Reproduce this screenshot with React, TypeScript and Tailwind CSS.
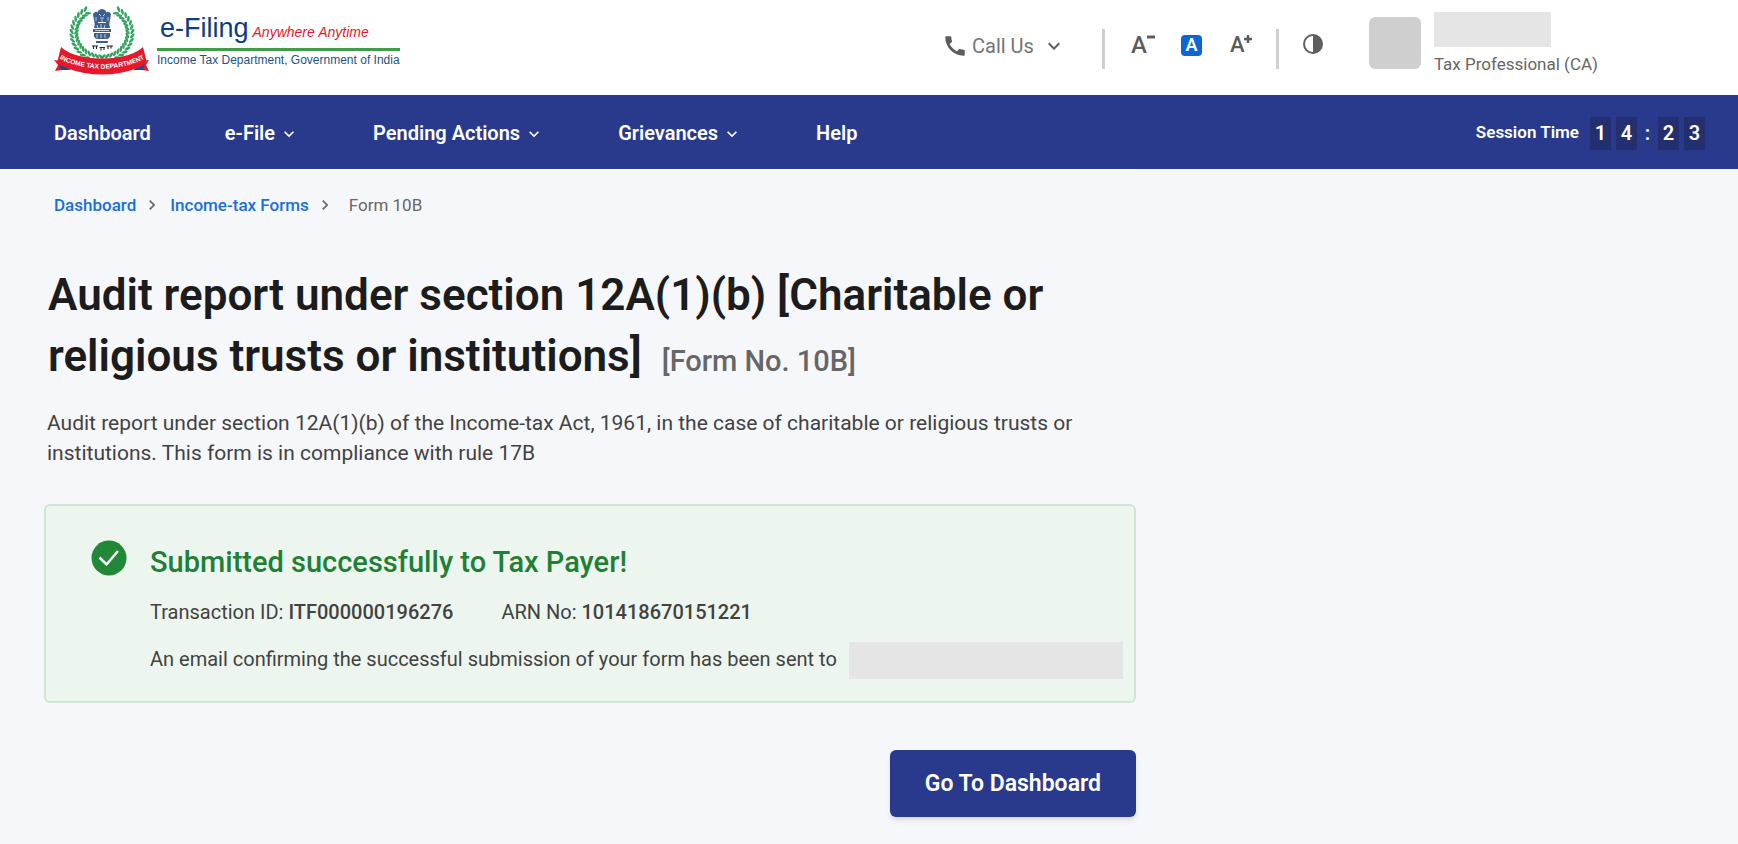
import React from "react";
import { MdCall, MdExpandMore, MdChevronRight } from "react-icons/md";

const leafAngles = [-58, -49, -40, -31, -22, -13, -4, 5, 14, 23, 32, 41, 50, 59, 68, 77, 86];

function WreathHalf({ flip }: { flip: boolean }) {
  return (
    <g transform={flip ? "translate(204 0) scale(-1 1)" : undefined} fill="#2fa45c">
      {leafAngles.map((angle) => {
        const rad = (angle * Math.PI) / 180;
        const x = 102 + Math.cos(rad) * 28;
        const y = 33 + Math.sin(rad) * 26;
        return (
          <g key={angle} transform={`translate(${x} ${y}) rotate(${angle - 90})`}>
            <ellipse cx="1" cy="-2.3" rx="3.1" ry="1.3" transform="rotate(-35)" />
            <ellipse cx="1" cy="2.3" rx="3.1" ry="1.3" transform="rotate(35)" />
          </g>
        );
      })}
    </g>
  );
}

function Emblem() {
  return (
    <svg viewBox="54 6 96 70" className="h-[70px] w-24 shrink-0" role="img" aria-label="Income Tax Department emblem">
      <WreathHalf flip={false} />
      <WreathHalf flip />
      <g fill="#3c5f92">
        <path d="M98 11 Q102 7 106 11 L107 16 L106 22 L98 22 L97 16 Z" />
        <path d="M93 14 Q96 10 98 13 L98 24 L95 25 L94 20 Z" />
        <path d="M111 14 Q108 10 106 13 L106 24 L109 25 L110 20 Z" />
        <path d="M95 23 H109 L110 28 H94 Z" />
        <path d="M93 29 H111 V32 H93 Z" />
        <path d="M94 33 Q93 39 98 39 H106 Q111 39 110 33 Z" />
        <path d="M96 41 H108 V43 H96 Z" />
      </g>
      <g stroke="#dfe8f3" strokeWidth="0.8" fill="none">
        <path d="M99 14 L101 16 M105 14 L103 16 M100 18 H104 M102 19 V22 M96 17 V21 M108 17 V21" />
        <path d="M97 25 L98 28 M101 24 V28 M105 25 L104 28 M95 30.5 H109 M97 34 V38 M101 34 V38 M105 34 V38" />
      </g>
      <path d="M92 46 H98 M99.500 47.500 H105 M106.500 46 H113 M93.500 46 V49 M96.500 46 V49 M101 47.500 V50.500 M104 47.500 V50 M108 46 V49 M111 46 V48.500" stroke="#222" strokeWidth="1.100" fill="none" />
      <path d="M61 61 L54 60 L58 65 L55 71 L69 69 Z" fill="#e5192b" />
      <path d="M143 61 L149 60 L146 65 L149 71 L135 69 Z" fill="#e5192b" />
      <path d="M59 63 L71 70 L61 70 Z M145 63 L133 70 L143 70 Z" fill="#1f4a8c" />
      <path d="M61 47 Q68 54 84 57 Q102 60 120 57 Q136 54 143 47 L147 63 Q136 70 120 73 Q102 76 84 73 Q68 70 57 63 Z" fill="#e5192b" />
      <path id="ribbon-line" d="M56 56 Q70 67 102 69 Q134 67 148 56" fill="none" />
      <text fill="#fff" fontSize="6.600" fontWeight="700" fontFamily="Liberation Sans, sans-serif" textAnchor="middle">
        <textPath href="#ribbon-line" startOffset="50%">INCOME TAX DEPARTMENT</textPath>
      </text>
    </svg>
  );
}

function Divider() {
  return <span className="h-10 w-[3px] bg-[#cfcfcf]" />;
}

function Header() {
  return (
    <header className="flex h-[95px] items-start bg-white pl-[54px]">
      <a href="#home" className="flex shrink-0 gap-[7px] pt-1.5">
        <Emblem />
        <span className="flex flex-col pt-1.5 font-['Liberation_Sans',sans-serif]">
          <span className="flex items-baseline gap-1 border-b-[3px] border-[#3f9c48] pl-[3px] leading-8">
            <span className="text-[27px] text-[#0d3c82]">e-Filing</span>
            <span className="text-[14px] text-[#e5192b] italic">Anywhere Anytime</span>
          </span>
          <span className="text-[12px] leading-[18px] text-[#1d5488]">Income Tax Department, Government of India</span>
        </span>
      </a>
      <div className="ml-auto flex items-start pr-[140px]">
        <button type="button" className="mt-[26px] flex h-10 items-center gap-1 text-[20px] leading-6 text-[#757575]">
          <MdCall className="size-[26px] text-[#5c5c5c]" aria-hidden="true" />
          <span>Call Us</span>
          <MdExpandMore className="ml-1 size-6 text-[#5c5c5c]" aria-hidden="true" />
        </button>
        <div className="mt-[29px] ml-9 flex items-start">
          <Divider />
          <div className="flex items-center gap-7 pt-1 pr-6 pl-[26px]">
            <button type="button" aria-label="Decrease text size" className="flex h-6 w-[22px] items-start text-[24px] leading-6 font-medium text-[#5c5c5c]">
              A
              <svg viewBox="0 0 8 8" className="size-2 shrink-0" stroke="currentColor" strokeWidth="3"><path d="M0 4H8" /></svg>
            </button>
            <button type="button" aria-label="Default text size" className="flex size-[21px] items-center justify-center rounded-sm bg-[#0b67d6] text-[18px] leading-5 font-semibold text-white">A</button>
            <button type="button" aria-label="Increase text size" className="flex h-6 w-[22px] items-start text-[22px] leading-6 font-medium text-[#5c5c5c]">
              A
              <svg viewBox="0 0 8 8" className="mt-0.5 size-2 shrink-0" stroke="currentColor" strokeWidth="2.500"><path d="M0 4H8M4 0V8" /></svg>
            </button>
          </div>
          <Divider />
          <button type="button" aria-label="Toggle contrast" className="mt-[5px] ml-6 text-[#5f5f5f]">
            <svg viewBox="0 0 20 20" className="size-5">
              <circle cx="10" cy="10" r="9" fill="none" stroke="currentColor" strokeWidth="2" />
              <path d="M10 1A9 9 0 0 1 10 19Z" fill="currentColor" />
            </svg>
          </button>
        </div>
        <div className="mt-[17px] ml-[46px] size-[52px] rounded-md bg-[#cfcfcf]" />
        <div className="mt-3 ml-[13px] flex flex-col gap-[5px]">
          <span className="h-[35px] w-[117px] bg-[#e5e5e5]" />
          <span className="text-[17px] leading-6 text-[#666]">Tax Professional (CA)</span>
        </div>
      </div>
    </header>
  );
}

function NavMenu({ label }: { label: string }) {
  return (
    <button type="button" className="flex items-center gap-1">
      {label}
      <MdExpandMore className="mt-0.5 size-5" aria-hidden="true" />
    </button>
  );
}

function Digit({ value }: { value: string }) {
  return <span className="flex h-[33px] w-[21px] items-center justify-center bg-[#232f6e]">{value}</span>;
}

function NavBar() {
  return (
    <nav className="flex h-[74px] items-center bg-[#293a8c] pt-0.5 pr-[33px] pl-[54px] text-[20px] font-semibold text-white">
      <div className="flex items-center gap-[74px]">
        <a href="#dashboard">Dashboard</a>
        <NavMenu label="e-File" />
        <NavMenu label="Pending Actions" />
        <NavMenu label="Grievances" />
        <a href="#help">Help</a>
      </div>
      <div className="ml-auto flex items-center gap-[5px]">
        <span className="mr-1.5 text-[17px]">Session Time</span>
        <Digit value="1" />
        <Digit value="4" />
        <span className="w-[11px] text-center">:</span>
        <Digit value="2" />
        <Digit value="3" />
      </div>
    </nav>
  );
}

function Breadcrumbs() {
  return (
    <nav aria-label="Breadcrumb" className="flex items-center pt-[22px] pl-[10px] text-[17px] leading-6 text-[#666]">
      <a href="#dashboard" className="font-medium text-[#1a6fd6]">Dashboard</a>
      <MdChevronRight className="mr-2 ml-1.5 size-5" aria-hidden="true" />
      <a href="#forms" className="font-medium text-[#1a6fd6]">Income-tax Forms</a>
      <MdChevronRight className="mr-3.5 ml-1.5 size-5" aria-hidden="true" />
      <span>Form 10B</span>
    </nav>
  );
}

export default function App() {
  return (
    <div className="min-h-screen bg-[#f6f7fb] font-[Roboto,sans-serif]">
      <Header />
      <NavBar />
      <main className="max-w-[1136px] border-t-2 border-white pb-6 pl-11">
        <Breadcrumbs />
        <h1 className="mt-12 pl-1 text-[44px] leading-[61px] font-semibold text-[#1c1c1c]">
          Audit report under section 12A(1)(b) [Charitable or religious trusts or institutions]
          <span className="ml-5 text-[29px] leading-8 font-medium text-[#666]">[Form No. 10B]</span>
        </h1>
        <p className="mt-[21px] pl-[3px] text-[21px] leading-[30px] text-[#424242]">
          Audit report under section 12A(1)(b) of the Income-tax Act, 1961, in the case of charitable or religious trusts or institutions. This form is in compliance with rule 17B
        </p>
        <section className="mt-9 flex rounded-md border-2 border-[#cfe6d3] bg-[#edf6ee] pt-[34px] pr-[11px] pb-[22px] pl-[45px]">
          <svg viewBox="0 0 36 36" className="size-9 shrink-0" aria-hidden="true">
            <circle cx="18" cy="18" r="17.500" fill="#218838" />
            <path d="M8.500 17.500L15.500 24.500L27 11" fill="none" stroke="#fff" strokeWidth="2.500" />
          </svg>
          <div className="ml-[23px] grow text-[20px] text-[#424242]">
            <h2 className="text-[29px] leading-[44px] font-medium text-[#1f8035]">Submitted successfully to Tax Payer!</h2>
            <div className="mt-[15px] flex gap-12 leading-[26px]">
              <span>Transaction ID: <strong className="font-medium">ITF000000196276</strong></span>
              <span>ARN No: <strong className="font-medium">101418670151221</strong></span>
            </div>
            <div className="mt-[17px] flex items-start gap-3">
              <span className="leading-[34px]">An email confirming the successful submission of your form has been sent to</span>
              <span className="h-[37px] grow bg-[#e5e5e5]" />
            </div>
          </div>
        </section>
        <div className="mt-[47px] flex justify-end">
          <button type="button" className="h-[67px] rounded-md bg-[#293a8c] px-[35px] pt-0.5 text-[23px] font-semibold text-white shadow-md">Go To Dashboard</button>
        </div>
      </main>
    </div>
  );
}
